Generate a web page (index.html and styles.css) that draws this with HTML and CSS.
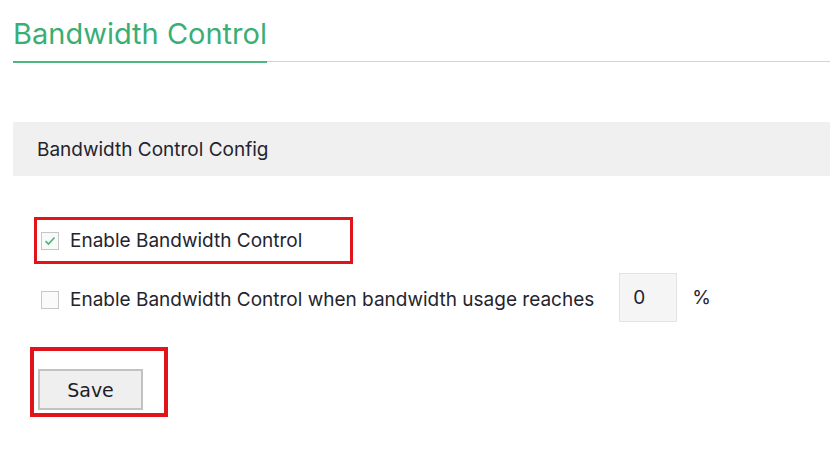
FILE: index.html
```html
<!DOCTYPE html>
<html>
<head>
<meta charset="utf-8">
<link rel="stylesheet" href="styles.css">
</head>
<body>
<div class="page">
  <div class="tabbar">
    <h1 class="title">Bandwidth Control</h1>
  </div>
  <div class="band">Bandwidth Control Config</div>
  <div class="form">
    <div class="mark mark-row">
      <label class="check-row">
        <span class="box checked">
          <svg width="12" height="10" viewBox="0 0 12 10"><path d="M1.5 5.2 L4.5 8 L10.5 1.5" fill="none" stroke="#47b67c" stroke-width="1.6"/></svg>
        </span>
        <span class="label">Enable Bandwidth Control</span>
      </label>
    </div>
    <div class="row2">
      <span class="box"></span>
      <span class="label">Enable Bandwidth Control when bandwidth usage reaches</span>
      <span class="num">0</span>
      <span class="pct">%</span>
    </div>
    <div class="mark mark-save">
      <button class="save">Save</button>
    </div>
  </div>
</div>
</body>
</html>
```

FILE: styles.css
```css
html, body {
  margin: 0;
  padding: 0;
  background: #ffffff;
}
.page {
  width: 830px;
  height: 452px;
  padding-left: 13px;
  box-sizing: border-box;
  font-family: Inter, "Noto Sans", sans-serif;
  color: #24242e;
}
.tabbar {
  border-bottom: 1px solid #d2d2d2;
  height: 62px;
  box-sizing: border-box;
}
.title {
  display: inline-block;
  margin: 0;
  padding-top: 17px;
  height: 63px;
  box-sizing: border-box;
  border-bottom: 2px solid #4cb77e;
  font-size: 29px;
  line-height: 34px;
  font-weight: 400;
  color: #3aae75;
}
.band {
  margin-top: 60px;
  height: 54px;
  background: #f0f0f0;
  padding-left: 24px;
  display: flex;
  align-items: center;
  font-size: 19px;
}
.form {
  padding-top: 41px;
}
.mark {
  border: 3px solid #e1141b;
  display: inline-flex;
  box-sizing: border-box;
}
.mark-row {
  margin-left: 21px;
  width: 319px;
  height: 47px;
  align-items: center;
  padding-left: 4px;
}
.check-row {
  display: flex;
  align-items: center;
}
.box {
  width: 18px;
  height: 18px;
  box-sizing: border-box;
  border: 1px solid #c6c6c6;
  background: #fafafa;
  display: inline-flex;
  align-items: center;
  justify-content: center;
  flex: none;
}
.label {
  font-size: 19px;
  margin-left: 11px;
}
.row2 {
  display: flex;
  align-items: center;
  margin-left: 28px;
  margin-top: 9px;
  height: 49px;
}
.row2 .box {
  margin-top: 4px;
}
.row2 .label {
  margin-top: 3px;
}
.num {
  margin-left: 25px;
  width: 58px;
  height: 49px;
  box-sizing: border-box;
  border: 1px solid #e3e3e3;
  background: #f5f5f5;
  display: flex;
  align-items: center;
  padding-left: 13px;
  font-size: 19px;
}
.pct {
  margin-left: 15px;
  font-size: 19px;
}
.mark-save {
  margin-left: 17px;
  margin-top: 25px;
  width: 138px;
  height: 70px;
  border-width: 4px;
  padding: 18px 0 0 4px;
  align-items: flex-start;
}
.save {
  width: 105px;
  height: 41px;
  box-sizing: border-box;
  border: 2px solid #c2c2c2;
  background: #efefef;
  font-family: "DejaVu Sans", Verdana, sans-serif;
  font-size: 19px;
  color: #1e1e28;
  padding: 0;
}
```
